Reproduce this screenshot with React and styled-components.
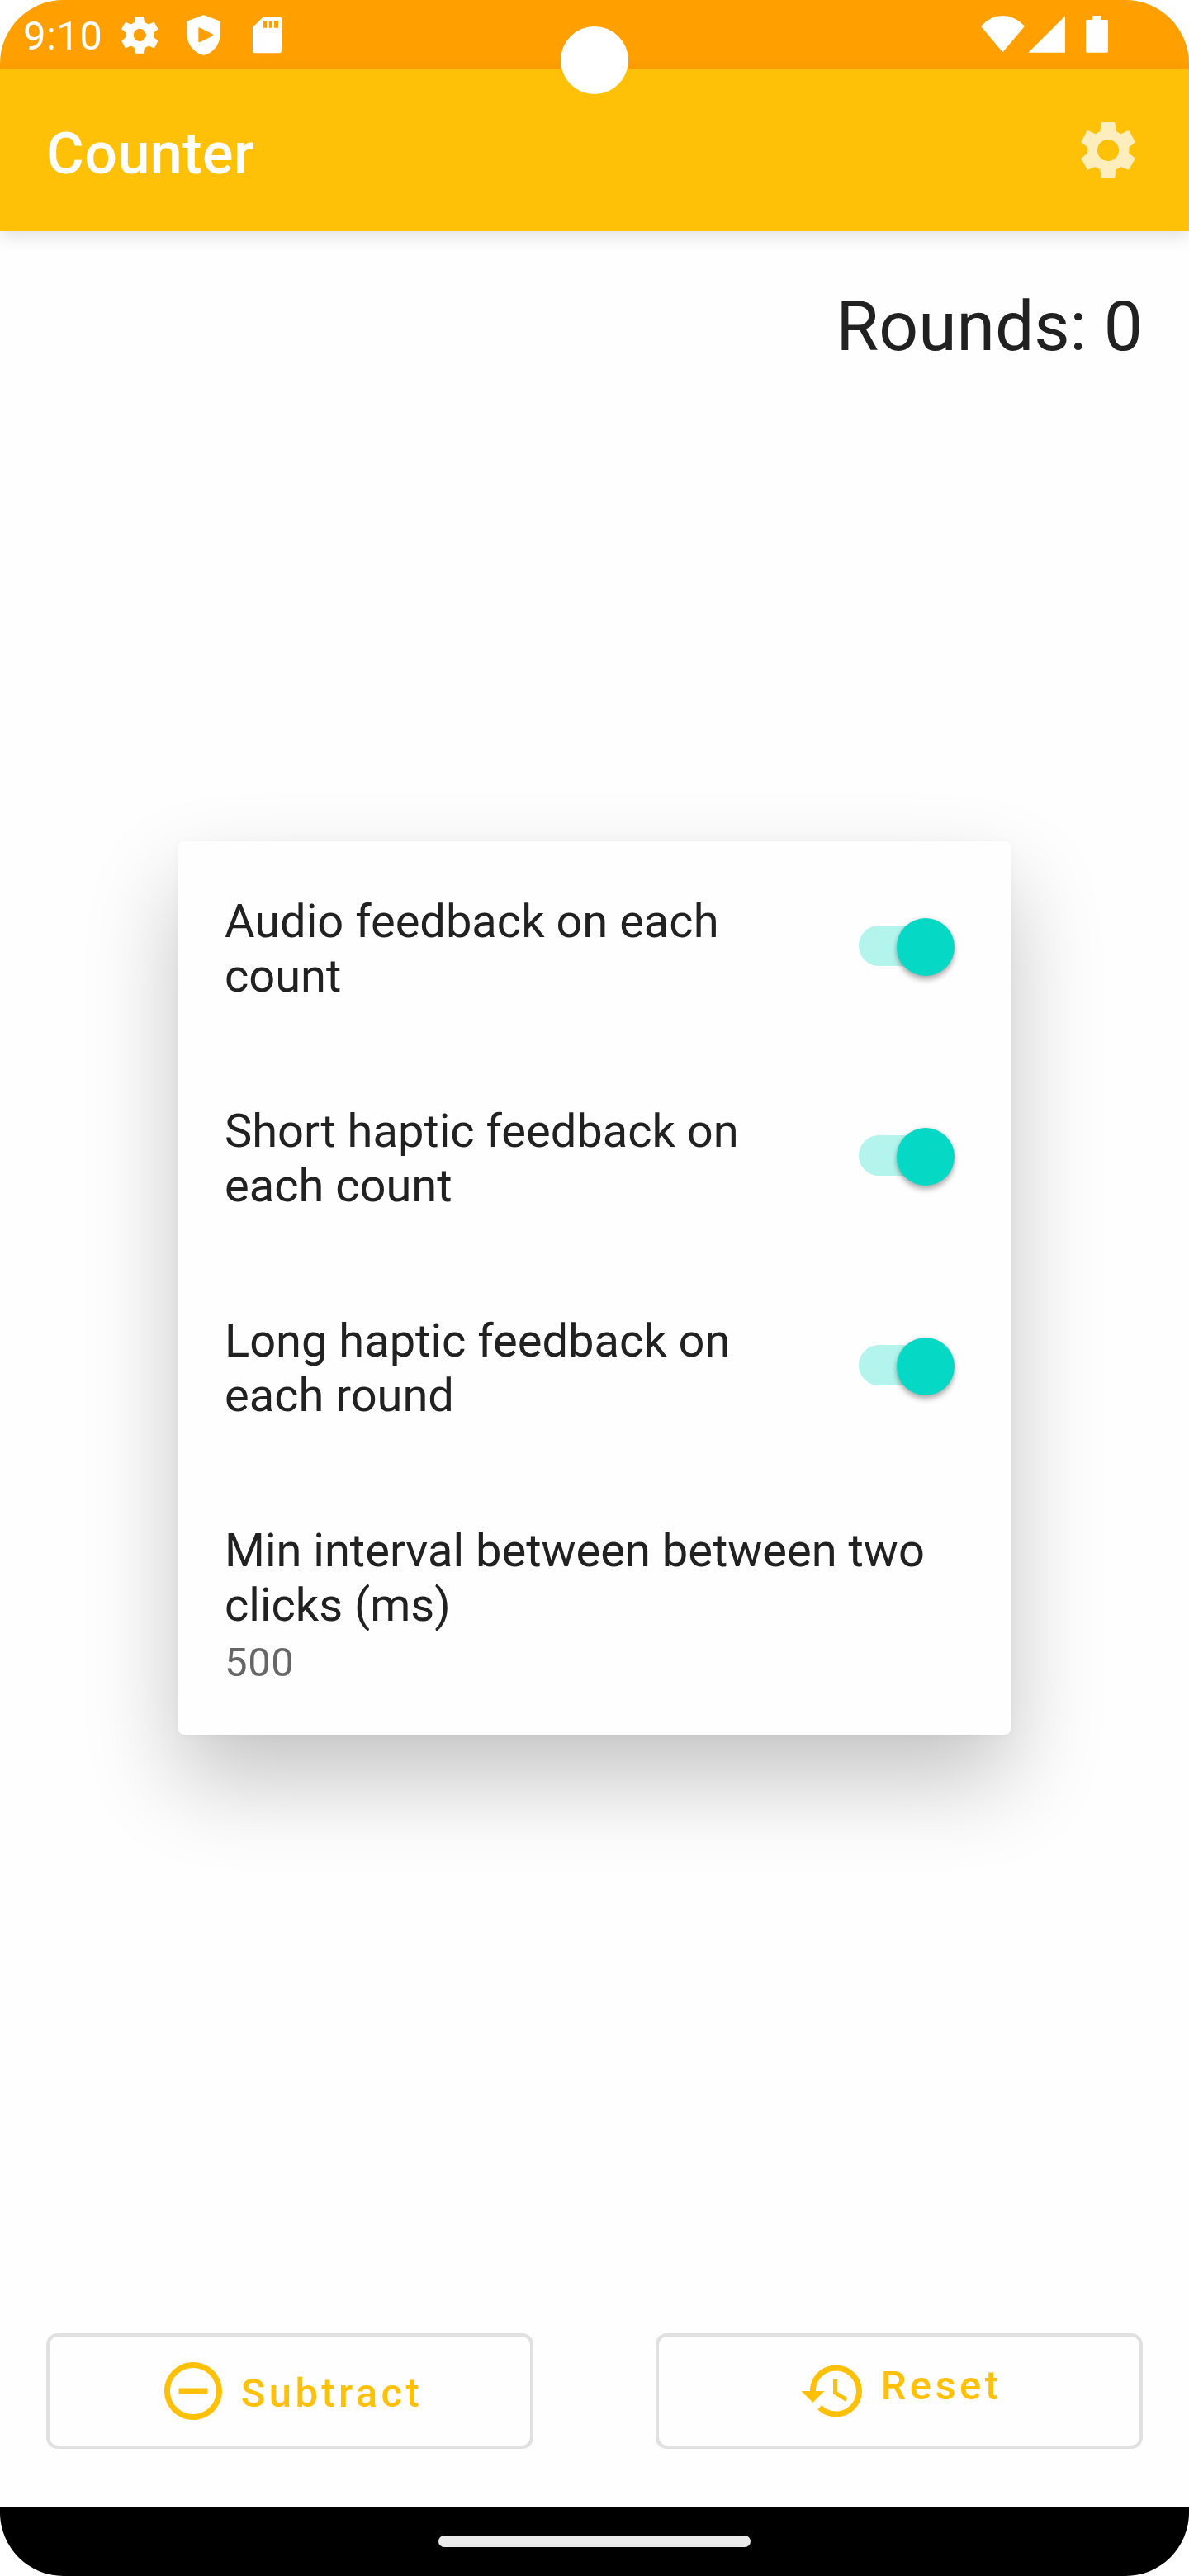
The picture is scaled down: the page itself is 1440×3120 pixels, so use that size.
import React from "react";
import styled, { createGlobalStyle } from "styled-components";

const GlobalStyle = createGlobalStyle`
  * { box-sizing: border-box; }
  body { margin: 0; background: #fff; }
`;

const Screen = styled.div`
  position: relative;
  display: flex;
  flex-direction: column;
  width: 1440px;
  height: 3120px;
  overflow: hidden;
  border-radius: 77px;
  background: #fefefe;
  color: #212121;
  font-family: Roboto, "Liberation Sans", sans-serif;
`;

const StatusBar = styled.header`
  display: flex;
  align-items: flex-start;
  justify-content: space-between;
  height: 84px;
  padding: 0 98px 0 28px;
  background: #ffa000;
`;

const StatusGroup = styled.div`
  display: flex;
  align-items: flex-start;
`;

const Clock = styled.span`
  width: 119px;
  padding-top: 15px;
  color: #fff;
  font-size: 49px;
  line-height: 58px;
  letter-spacing: 0.4px;
`;

const Glyph = styled.svg`
  display: block;
  flex: none;
  width: ${(p) => p.$w}px;
  height: ${(p) => p.$h}px;
  margin-left: ${(p) => p.$gap || 0}px;
  fill: ${(p) => p.$color || "#fff"};
`;

const Camera = styled.div`
  position: absolute;
  top: 32px;
  left: 679px;
  z-index: 3;
  width: 82px;
  height: 82px;
  border-radius: 50%;
  background: #fff;
`;

const AppBar = styled.div`
  display: flex;
  align-items: center;
  justify-content: space-between;
  height: 196px;
  padding: 0 64px 0 56px;
  background: #ffc107;
  box-shadow: 0 6px 20px rgba(0, 0, 0, 0.12);
`;

const Title = styled.h1`
  margin: 0;
  padding-top: 8px;
  color: #fff;
  font-size: 70px;
  font-weight: 500;
  line-height: 82px;
  letter-spacing: 0.5px;
`;

const Content = styled.main`
  display: flex;
  flex: 1;
  flex-direction: column;
  justify-content: space-between;
  padding: 67px 56px 70px;
`;

const Rounds = styled.div`
  font-size: 84px;
  line-height: 98px;
  text-align: right;
`;

const Actions = styled.div`
  display: flex;
  justify-content: space-between;
`;

const ActionButton = styled.button`
  display: flex;
  align-items: center;
  justify-content: center;
  gap: 16px;
  width: 590px;
  height: 140px;
  padding: 0 0 0 2px;
  border: 4px solid #e0e0e0;
  border-radius: 14px;
  background: transparent;
  color: #ffc107;
  font: 500 49px/58px Roboto, "Liberation Sans", sans-serif;
  letter-spacing: 4.375px;
`;

const ButtonLabel = styled.span`
  padding-top: ${(p) => p.$top || 0}px;
  padding-bottom: ${(p) => p.$bottom || 0}px;
`;

const NavBar = styled.footer`
  display: flex;
  align-items: center;
  justify-content: center;
  height: 84px;
  background: #000;
`;

const NavHandle = styled.div`
  width: 378px;
  height: 14px;
  border-radius: 7px;
  background: #ebebeb;
`;

const Overlay = styled.div`
  position: absolute;
  inset: 0;
  z-index: 2;
  display: grid;
  place-items: center;
`;

const Dialog = styled.section`
  width: 1008px;
  height: 1082px;
  border-radius: 7px;
  background: #fefefe;
  box-shadow: 0 54px 112px rgba(0, 0, 0, 0.23), 0 2px 12px rgba(0, 0, 0, 0.03);
`;

const Row = styled.div`
  display: flex;
  justify-content: space-between;
  height: ${(p) => (p.$tall ? 320 : 254)}px;
  padding: 64px 68px 0 56px;
`;

const Label = styled.div`
  font-size: 56px;
  line-height: 66px;
  white-space: nowrap;
`;

const Summary = styled.div`
  padding-top: 8px;
  color: #666;
  font-size: 49px;
  line-height: 58px;
  letter-spacing: 0.6px;
`;

const Track = styled.div`
  display: flex;
  align-items: center;
  justify-content: flex-end;
  width: 116px;
  height: 49px;
  margin-top: 38px;
  border-radius: 25px;
  background: linear-gradient(90deg, #b3f4ec 85px, transparent 85px);
`;

const Thumb = styled.div`
  flex: none;
  width: 70px;
  height: 70px;
  margin-top: 2px;
  border-radius: 50%;
  background: #05d8c4;
  box-shadow: 0 5px 6px rgba(0, 0, 0, 0.27), 0 0 5px rgba(0, 0, 0, 0.12);
`;

const toggles = [
  ["Audio feedback on each", "count"],
  ["Short haptic feedback on", "each count"],
  ["Long haptic feedback on", "each round"],
];

function StatusIcons() {
  return (
    <>
      <Glyph $w={44} $h={84} viewBox="441 0 132 252">
        <path
          fillRule="evenodd"
          stroke="#fff"
          strokeWidth="6"
          strokeLinejoin="round"
          d="M494 63h28l3 21 15 8 19-8 12 21-16 13q2 9 0 18l16 13-12 22-19-8-15 8-3 20h-28l-3-20-15-8-19 8-12-22 16-13q-2-9 0-18l-16-13 12-21 19 8 15-8z M508 101a26 26 0 1 0 0 52a26 26 0 1 0 0-52z"
        />
      </Glyph>
      <Glyph $w={41} $h={84} $gap={35} viewBox="677 0 123 252">
        <path
          fillRule="evenodd"
          d="M739 54l60 23v46c0 38-24 69-60 78c-36-9-61-40-61-78V77z M720 104v45q0 6 6 4l44-22q8-4 0-8l-44-22q-6-3-6 3z"
        />
      </Glyph>
      <Glyph $w={35} $h={84} $gap={39} viewBox="918 0 105 252">
        <path
          fillRule="evenodd"
          d="M958 60h56q9 0 9 9v115q0 9-9 9h-87q-9 0-9-9V99z M957 75v26h12V75z M977 75v26h13V75z M996 75v26h15V75z"
        />
      </Glyph>
    </>
  );
}

export default function App() {
  return (
    <>
      <GlobalStyle />
      <Screen>
        <StatusBar>
          <StatusGroup>
            <Clock>9:10</Clock>
            <StatusIcons />
          </StatusGroup>
          <StatusGroup>
            <Glyph $w={53} $h={84} viewBox="144 0 159 252">
              <path d="M144 95Q179 57 223 57T303 95L223 190z" />
            </Glyph>
            <Glyph $w={45} $h={84} $gap={4} viewBox="315 0 135 252">
              <path d="M316 191L450 58v133z" />
            </Glyph>
            <Glyph $w={27} $h={84} $gap={25} viewBox="525 0 81 252">
              <path d="M549 57h33v15h20q4 0 4 4v111q0 4-4 4h-73q-4 0-4-4V76q0-4 4-4h20z" />
            </Glyph>
          </StatusGroup>
        </StatusBar>
        <Camera />
        <AppBar>
          <Title>Counter</Title>
          <Glyph $w={68} $h={196} $color="#ffeebd" viewBox="504 252 204 588">
            <path
              fillRule="evenodd"
              stroke="#ffeebd"
              strokeWidth="4"
              strokeLinejoin="round"
              d="M583 446h46l4 32 19 11 28-13 23 40-23 18v24l23 18-23 39-28-11-19 11-4 31h-46l-4-31-19-11-28 11-22-39 23-18v-24l-23-18 22-40 28 13 19-11z M606 505a41 41 0 1 0 0 82a41 41 0 1 0 0-82z"
            />
          </Glyph>
        </AppBar>
        <Content>
          <Rounds>Rounds: 0</Rounds>
          <Actions>
            <ActionButton>
              <Glyph $w={84} $h={84} $color="#ffc107" viewBox="0 0 24 24">
                <path d="M7 11v2h10v-2H7zm5-9C6.48 2 2 6.48 2 12s4.48 10 10 10 10-4.48 10-10S17.52 2 12 2zm0 18c-4.41 0-8-3.59-8-8s3.59-8 8-8 8 3.59 8 8-3.59 8-8 8z" />
              </Glyph>
              <ButtonLabel $top={5}>Subtract</ButtonLabel>
            </ActionButton>
            <ActionButton>
              <Glyph $w={84} $h={84} $color="#ffc107" viewBox="0 0 24 24">
                <path d="M13 3c-4.97 0-9 4.03-9 9H1l3.89 3.89.07.14L9 12H6c0-3.87 3.13-7 7-7s7 3.13 7 7-3.13 7-7 7c-1.93 0-3.68-.79-4.94-2.06l-1.42 1.42C8.27 19.99 10.51 21 13 21c4.97 0 9-4.03 9-9s-4.03-9-9-9zm-1 5v5l4.28 2.54.72-1.21-3.5-2.08V8H12z" />
              </Glyph>
              <ButtonLabel $bottom={12}>Reset</ButtonLabel>
            </ActionButton>
          </Actions>
        </Content>
        <NavBar>
          <NavHandle />
        </NavBar>
        <Overlay>
          <Dialog>
            {toggles.map(([first, second]) => (
              <Row key={first}>
                <Label>
                  {first}
                  <br />
                  {second}
                </Label>
                <Track>
                  <Thumb />
                </Track>
              </Row>
            ))}
            <Row $tall>
              <div>
                <Label>
                  Min interval between between two
                  <br />
                  clicks (ms)
                </Label>
                <Summary>500</Summary>
              </div>
            </Row>
          </Dialog>
        </Overlay>
      </Screen>
    </>
  );
}
